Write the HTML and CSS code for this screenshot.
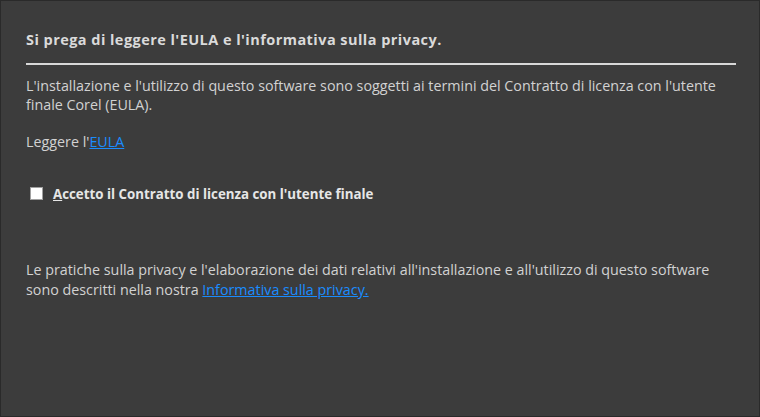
FILE: index.html
```html
<!DOCTYPE html>
<html lang="it">
<head>
<meta charset="utf-8">
<link rel="stylesheet" href="styles.css">
</head>
<body>
<div class="window">
  <h1 class="title">Si prega di leggere l'EULA e l'informativa sulla privacy.</h1>
  <div class="rule"></div>
  <p class="text">L'installazione e l'utilizzo di questo software sono soggetti ai termini del Contratto di licenza con l'utente finale Corel (EULA).</p>
  <p class="text read">Leggere l'<a class="link" href="#">EULA</a></p>
  <label class="check">
    <span class="box"></span>
    <span class="check-label"><span class="acc">A</span>ccetto il Contratto di licenza con l'utente finale</span>
  </label>
  <p class="text privacy">Le pratiche sulla privacy e l'elaborazione dei dati relativi all'installazione e all'utilizzo di questo software sono descritti nella nostra <a class="link" href="#">Informativa sulla privacy.</a></p>
</div>
</body>
</html>
```
FILE: styles.css
```css
html, body {
  margin: 0;
  padding: 0;
  background: #3c3c3c;
}
body {
  font-family: "Open Sans", "Noto Sans", sans-serif;
  color: #d6d6d6;
}
.window {
  box-sizing: border-box;
  width: 760px;
  height: 417px;
  border: 1px solid #2a2a2a;
  background: #3c3c3c;
  padding: 0 25px 0 25px;
  display: flex;
  flex-direction: column;
}
.title {
  margin: 29px 0 0 0;
  font-size: 14.5px;
  font-weight: 700;
  letter-spacing: 0.45px;
  line-height: 19px;
  color: #dadada;
}
.rule {
  margin-top: 14px;
  height: 2px;
  width: 710px;
  background: #d8d8d8;
}
.text {
  margin: 0;
  font-size: 14.3px;
  line-height: 19px;
  color: #d2d2d2;
  width: 710px;
}
.rule + .text {
  margin-top: 11px;
}
.read {
  margin-top: 18px;
}
.link {
  color: #1a8cff;
  text-decoration: underline;
}
.check {
  margin-top: 34px;
  margin-left: 4px;
  display: flex;
  align-items: center;
  gap: 10px;
}
.box {
  box-sizing: border-box;
  width: 13px;
  height: 13px;
  margin-bottom: 3px;
  background: #ffffff;
  border: 1px solid #a0a0a0;
}
.check-label {
  font-size: 13.3px;
  font-weight: 700;
  color: #e6e6e6;
  line-height: 19px;
}
.acc {
  text-decoration: underline;
}
.privacy {
  margin-top: 56px;
  line-height: 20px;
}
```
